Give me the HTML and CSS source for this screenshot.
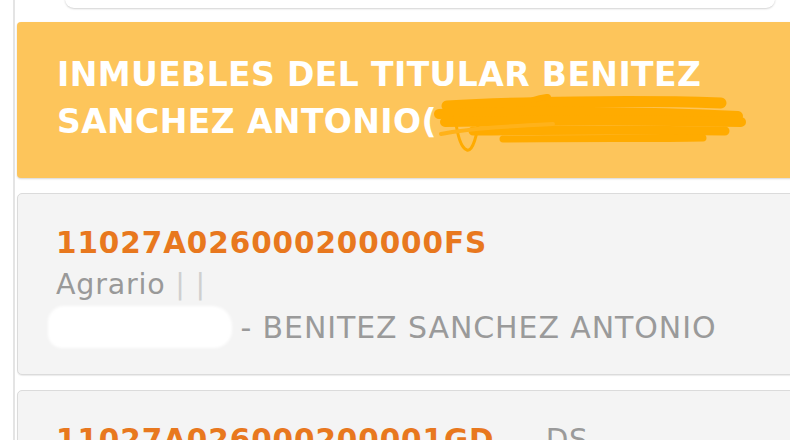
FILE: index.html
```html
<!DOCTYPE html>
<html lang="es">
<head>
<meta charset="utf-8">
<title>Inmuebles del titular</title>
<link rel="stylesheet" href="styles.css">
</head>
<body>
<div class="page">
  <div class="rail">
    <div class="prev-card"></div>

    <div class="owner-header">
      <h1 class="owner-title">INMUEBLES DEL TITULAR BENITEZ<br>SANCHEZ ANTONIO(</h1>
      <svg class="scribble" width="330" height="70" viewBox="0 0 330 70" aria-hidden="true">
        <g fill="none" stroke="#ffab00" stroke-linecap="round" stroke-linejoin="round">
          <path d="M14 12 C80 8 200 6 288 9" stroke-width="11"/>
          <path d="M6 20 C100 16 220 18 305 22" stroke-width="10"/>
          <path d="M12 28 C120 26 230 26 308 28" stroke-width="10"/>
          <path d="M40 37 C130 36 220 36 292 37" stroke-width="9"/>
          <path d="M70 45 C150 44 220 45 270 44" stroke-width="7"/>
          <path d="M100 6 C110 3 118 2 114 4" stroke-width="6"/>
          <path d="M22 22 C24 40 28 54 34 56 C40 58 44 40 46 26" stroke-width="3"/>
          <path d="M8 40 C40 34 80 32 120 30" stroke-width="4" stroke="#ffb21a"/>
        </g>
      </svg>
    </div>

    <div class="parcel-card">
      <div class="ref">11027A026000200000FS</div>
      <div class="use">Agrario <span class="sep">|</span> <span class="sep">|</span></div>
      <div class="holder"><span class="redact"></span> - BENITEZ SANCHEZ ANTONIO</div>
    </div>

    <div class="parcel-card">
      <div class="ref">11027A026000200001GD <span class="code">DS</span></div>
      <div class="use">Agrario <span class="sep">|</span> <span class="sep">|</span></div>
    </div>
  </div>
</div>
</body>
</html>
```

FILE: styles.css
```css
html, body {
  margin: 0;
  padding: 0;
  background: #ffffff;
  overflow: hidden;
}

body {
  width: 790px;
  height: 440px;
  font-family: "DejaVu Sans", Verdana, sans-serif;
}

.page {
  padding-left: 13px;
  width: 800px;
}

.rail {
  border-left: 2px solid #e4e4e4;
  padding-left: 2px;
  min-height: 460px;
  display: flex;
  flex-direction: column;
}

.prev-card {
  height: 40px;
  margin: -32px 38px 0 48px;
  background: #ffffff;
  border-radius: 0 0 9px 9px;
  box-shadow: 0 1px 2px rgba(0, 0, 0, 0.18);
}

.owner-header {
  position: relative;
  margin-top: 14px;
  background: #fdc55b;
  border-radius: 4px;
  box-shadow: 0 1px 2px rgba(0, 0, 0, 0.16);
  padding: 29px 20px 33px 40px;
}

.owner-title {
  margin: 0;
  color: #ffffff;
  font-size: 33px;
  line-height: 47px;
  font-weight: bold;
  letter-spacing: 0.4px;
}

.scribble {
  position: absolute;
  left: 416px;
  top: 72px;
}

.parcel-card {
  margin-top: 15px;
  background: #f4f4f4;
  border: 1px solid #dbdbdb;
  border-radius: 5px;
  box-shadow: 0 1px 1px rgba(0, 0, 0, 0.08);
  padding: 28px 20px 24px 38px;
}

.ref {
  color: #e8781e;
  font-size: 29.5px;
  line-height: 42px;
  font-weight: bold;
  letter-spacing: 0.9px;
}

.code {
  color: #9a9a9a;
  font-weight: normal;
  margin-left: 40px;
  letter-spacing: 0.6px;
}

.use {
  color: #999999;
  font-size: 28.5px;
  line-height: 42px;
  letter-spacing: 0.8px;
}

.sep {
  color: #cfcfcf;
}

.holder {
  color: #9a9a9a;
  font-size: 30px;
  line-height: 44px;
  letter-spacing: 0.9px;
}

.redact {
  display: inline-block;
  vertical-align: -8px;
  width: 180px;
  height: 38px;
  margin-left: -6px;
  background: #ffffff;
  border-radius: 14px 18px 16px 12px;
  box-shadow: 0 0 3px 2px #ffffff;
}
```
